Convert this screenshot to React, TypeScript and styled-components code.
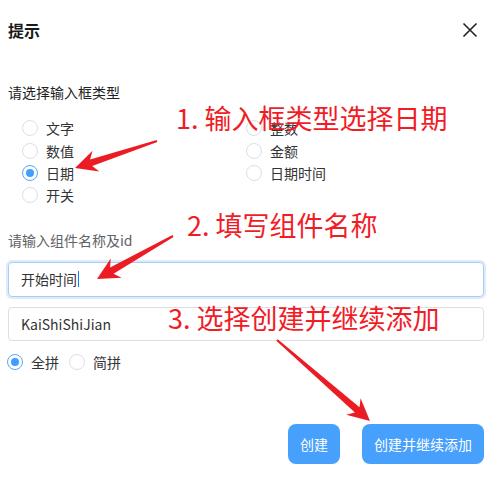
import React from 'react';
import styled, { createGlobalStyle } from 'styled-components';

const GlobalStyle = createGlobalStyle`
  html, body {
    margin: 0;
    padding: 0;
    background: #ffffff;
  }
  body {
    font-family: 'Noto Sans CJK SC', 'Noto Sans', sans-serif;
  }
`;

const Dialog = styled.div`
  position: relative;
  width: 491px;
  height: 490px;
  box-sizing: border-box;
  padding: 0 7px 0 8px;
  background: #fff;
  overflow: hidden;
`;

const Header = styled.div`
  display: flex;
  align-items: center;
  justify-content: space-between;
  height: 60px;
`;

const Title = styled.div`
  font-size: 16px;
  font-weight: 700;
  color: #1a1a1a;
  line-height: 20px;
`;

const CloseButton = styled.button`
  width: 24px;
  height: 24px;
  padding: 0;
  margin-right: 2px;
  border: none;
  background: transparent;
  display: flex;
  align-items: center;
  justify-content: center;
  cursor: pointer;
`;

const SectionLabel = styled.div<{ $muted?: boolean }>`
  font-size: 14px;
  line-height: 20px;
  color: ${(p) => (p.$muted ? '#606266' : '#222')};
  margin-top: ${(p) => (p.$muted ? '23px' : '22px')};
`;

const RadioGroup = styled.div`
  display: grid;
  grid-template-columns: 224px 224px;
  padding-left: 14px;
  margin-top: 15px;
`;

const RadioColumn = styled.div`
  display: flex;
  flex-direction: column;
`;

const RadioRow = styled.label<{ $inline?: boolean }>`
  display: flex;
  align-items: center;
  height: 22.4px;
  margin-right: ${(p) => (p.$inline ? '10px' : '0')};
  font-size: 14px;
  color: #333;
  cursor: pointer;
`;

const RadioCircle = styled.span<{ $checked?: boolean }>`
  width: 16px;
  height: 16px;
  box-sizing: border-box;
  border-radius: 50%;
  border: 1px solid ${(p) => (p.$checked ? '#5aa6f7' : '#dcdfe6')};
  margin-right: 8px;
  display: flex;
  align-items: center;
  justify-content: center;
  &::after {
    content: '';
    width: 8px;
    height: 8px;
    border-radius: 50%;
    background: ${(p) => (p.$checked ? '#409eff' : 'transparent')};
  }
`;

const Input = styled.div<{ $focused?: boolean }>`
  height: ${(p) => (p.$focused ? '35px' : '34px')};
  box-sizing: border-box;
  display: flex;
  align-items: center;
  padding: 0 12px;
  margin-top: ${(p) => (p.$focused ? '12px' : '10px')};
  border: 1px solid ${(p) => (p.$focused ? '#a8cdf5' : '#dcdfe6')};
  border-radius: 4px;
  box-shadow: ${(p) => (p.$focused ? '0 0 0 2px #dfeafa' : 'none')};
  font-size: 14px;
  color: #333;
`;

const Caret = styled.span`
  display: inline-block;
  width: 1px;
  height: 16px;
  background: #1677ff;
  margin-left: 1px;
`;

const InlineRadios = styled.div`
  display: flex;
  margin-top: 10px;
  margin-left: -1px;
`;

const Footer = styled.div`
  display: flex;
  justify-content: flex-end;
  gap: 22px;
  margin-top: 51px;
`;

const PrimaryButton = styled.button`
  height: 40px;
  padding: 0 12px;
  border: none;
  border-radius: 8px;
  background: #47a0fc;
  color: #fff;
  font-family: 'Noto Sans CJK SC', sans-serif;
  font-size: 14px;
  cursor: pointer;
`;

const Annotation = styled.div<{ $top: number; $left: number }>`
  position: absolute;
  top: ${(p) => p.$top}px;
  left: ${(p) => p.$left}px;
  font-family: 'Noto Sans CJK SC', sans-serif;
  font-size: 27px;
  line-height: 1;
  color: #f01d27;
  white-space: nowrap;
  pointer-events: none;
`;

const Overlay = styled.svg`
  position: absolute;
  inset: 0;
  pointer-events: none;
`;

type Pt = [number, number];

// builds a tapered arrow polygon from tail to tip
const arrowPoints = (tail: Pt, tip: Pt, headLen = 22, headW = 22, tailW = 1, neckW = 7) => {
  const dx = tip[0] - tail[0];
  const dy = tip[1] - tail[1];
  const len = Math.hypot(dx, dy);
  const ux = dx / len;
  const uy = dy / len;
  const nx = -uy;
  const ny = ux;
  const bx = tip[0] - ux * headLen;
  const by = tip[1] - uy * headLen;
  // slightly swept-back head base
  const nbx = tip[0] - ux * (headLen - 5);
  const nby = tip[1] - uy * (headLen - 5);
  const pts: Pt[] = [
    [tail[0] + nx * tailW, tail[1] + ny * tailW],
    [nbx + nx * neckW / 2, nby + ny * neckW / 2],
    [bx + nx * headW / 2, by + ny * headW / 2],
    tip,
    [bx - nx * headW / 2, by - ny * headW / 2],
    [nbx - nx * neckW / 2, nby - ny * neckW / 2],
    [tail[0] - nx * tailW, tail[1] - ny * tailW],
  ];
  return pts.map((p) => `${p[0].toFixed(1)},${p[1].toFixed(1)}`).join(' ');
};

const leftTypes = [
  { label: '文字', checked: false },
  { label: '数值', checked: false },
  { label: '日期', checked: true },
  { label: '开关', checked: false },
];

const rightTypes = [
  { label: '整数', checked: false },
  { label: '金额', checked: false },
  { label: '日期时间', checked: false },
];

const Radio = ({ label, checked, inline }: { label: string; checked?: boolean; inline?: boolean }) => (
  <RadioRow $inline={inline}>
    <RadioCircle $checked={checked} />
    {label}
  </RadioRow>
);

const App = () => {
  return (
    <>
      <GlobalStyle />
      <Dialog>
        <Header>
          <Title>提示</Title>
          <CloseButton aria-label="close">
            <svg width="16" height="16" viewBox="0 0 16 16">
              <path d="M1.5 1.5 L14.5 14.5 M14.5 1.5 L1.5 14.5" stroke="#222" strokeWidth="1.6" fill="none" />
            </svg>
          </CloseButton>
        </Header>

        <SectionLabel>请选择输入框类型</SectionLabel>
        <RadioGroup>
          <RadioColumn>
            {leftTypes.map((t) => (
              <Radio key={t.label} label={t.label} checked={t.checked} />
            ))}
          </RadioColumn>
          <RadioColumn>
            {rightTypes.map((t) => (
              <Radio key={t.label} label={t.label} checked={t.checked} />
            ))}
          </RadioColumn>
        </RadioGroup>

        <SectionLabel $muted>请输入组件名称及id</SectionLabel>
        <Input $focused>
          开始时间
          <Caret />
        </Input>
        <Input>KaiShiShiJian</Input>

        <InlineRadios>
          <Radio label="全拼" checked inline />
          <Radio label="简拼" inline />
        </InlineRadios>

        <Footer>
          <PrimaryButton>创建</PrimaryButton>
          <PrimaryButton>创建并继续添加</PrimaryButton>
        </Footer>

        <Annotation $top={104} $left={176}>1. 输入框类型选择日期</Annotation>
        <Annotation $top={211} $left={187}>2. 填写组件名称</Annotation>
        <Annotation $top={304} $left={168}>3. 选择创建并继续添加</Annotation>

        <Overlay width="491" height="490" viewBox="0 0 491 490">
          <polygon points={arrowPoints([157, 141], [75, 168])} fill="#ec1c24" />
          <polygon points={arrowPoints([173, 236], [97, 279])} fill="#ec1c24" />
          <polygon points={arrowPoints([277, 340], [370, 421])} fill="#ec1c24" />
        </Overlay>
      </Dialog>
    </>
  );
};

export default App;
